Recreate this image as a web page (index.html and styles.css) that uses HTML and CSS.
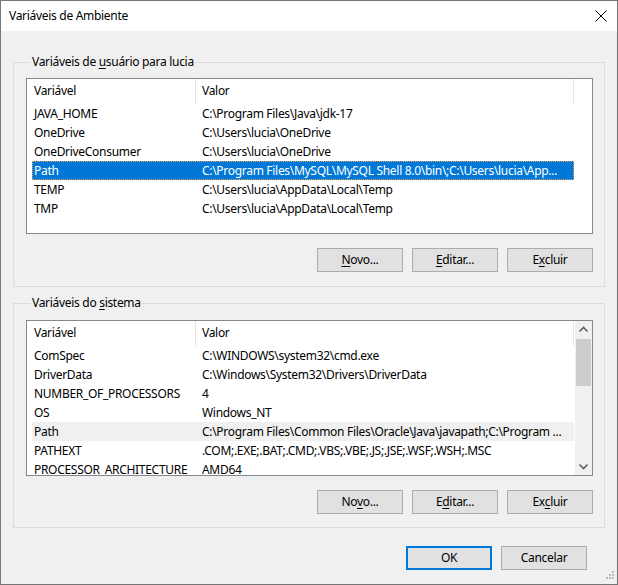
FILE: index.html
```html
<!DOCTYPE html>
<html lang="pt-BR">
<head>
<meta charset="utf-8">
<title>Variáveis de Ambiente</title>
<link rel="stylesheet" href="styles.css">
</head>
<body>
<div class="window">
  <div class="titlebar">
    <span class="title">Variáveis de Ambiente</span>
    <svg class="close" width="12" height="12" viewBox="0 0 12 12"><path d="M0.5 0.5 L11.5 11.5 M11.5 0.5 L0.5 11.5" stroke="#000" stroke-width="1" fill="none"/></svg>
  </div>
  <div class="content">
    <section class="group g1">
      <div class="legend">Variáveis de <u>u</u>suário para lucia</div>
      <div class="listview">
        <div class="lv-main">
          <div class="lv-header"><div class="h1">Variável</div><div class="h2">Valor</div></div>
          <div class="row"><span class="c1">JAVA_HOME</span><span class="c2">C:\Program Files\Java\jdk-17</span></div>
          <div class="row"><span class="c1">OneDrive</span><span class="c2">C:\Users\lucia\OneDrive</span></div>
          <div class="row"><span class="c1">OneDriveConsumer</span><span class="c2">C:\Users\lucia\OneDrive</span></div>
          <div class="row selected"><span class="c1">Path</span><span class="c2">C:\Program Files\MySQL\MySQL Shell 8.0\bin\;C:\Users\lucia\App...</span></div>
          <div class="row"><span class="c1">TEMP</span><span class="c2">C:\Users\lucia\AppData\Local\Temp</span></div>
          <div class="row"><span class="c1">TMP</span><span class="c2">C:\Users\lucia\AppData\Local\Temp</span></div>
        </div>
      </div>
      <div class="buttons">
        <button class="btn"><u>N</u>ovo...</button>
        <button class="btn"><u>E</u>ditar...</button>
        <button class="btn">E<u>x</u>cluir</button>
      </div>
    </section>

    <section class="group g2">
      <div class="legend">Variáveis do <u>s</u>istema</div>
      <div class="listview">
        <div class="lv-main">
          <div class="lv-header"><div class="h1">Variável</div><div class="h2">Valor</div></div>
          <div class="row"><span class="c1">ComSpec</span><span class="c2">C:\WINDOWS\system32\cmd.exe</span></div>
          <div class="row"><span class="c1">DriverData</span><span class="c2">C:\Windows\System32\Drivers\DriverData</span></div>
          <div class="row"><span class="c1">NUMBER_OF_PROCESSORS</span><span class="c2">4</span></div>
          <div class="row"><span class="c1">OS</span><span class="c2">Windows_NT</span></div>
          <div class="row hot"><span class="c1">Path</span><span class="c2">C:\Program Files\Common Files\Oracle\Java\javapath;C:\Program ...</span></div>
          <div class="row"><span class="c1">PATHEXT</span><span class="c2">.COM;.EXE;.BAT;.CMD;.VBS;.VBE;.JS;.JSE;.WSF;.WSH;.MSC</span></div>
          <div class="row"><span class="c1">PROCESSOR_ARCHITECTURE</span><span class="c2">AMD64</span></div>
        </div>
        <div class="scrollbar">
          <div class="sb-arrow"><svg width="17" height="17" viewBox="0 0 17 17"><polyline points="4.5,10.5 8.5,6.5 12.5,10.5" stroke="#606060" stroke-width="1.6" fill="none"/></svg></div>
          <div class="sb-track"><div class="sb-thumb"></div></div>
          <div class="sb-arrow"><svg width="17" height="17" viewBox="0 0 17 17"><polyline points="4.5,6.5 8.5,10.5 12.5,6.5" stroke="#606060" stroke-width="1.6" fill="none"/></svg></div>
        </div>
      </div>
      <div class="buttons">
        <button class="btn">No<u>v</u>o...</button>
        <button class="btn">E<u>d</u>itar...</button>
        <button class="btn">Ex<u>c</u>luir</button>
      </div>
    </section>

    <div class="dialog-buttons">
      <button class="btn default">OK</button>
      <button class="btn">Cancelar</button>
    </div>
  </div>
  <svg class="grip" width="12" height="12" viewBox="0 0 12 12">
    <rect x="9" y="0" width="2" height="2" fill="#bcbcbc"/>
    <rect x="6" y="3" width="2" height="2" fill="#bcbcbc"/>
    <rect x="9" y="3" width="2" height="2" fill="#bcbcbc"/>
    <rect x="3" y="6" width="2" height="2" fill="#bcbcbc"/>
    <rect x="6" y="6" width="2" height="2" fill="#bcbcbc"/>
    <rect x="9" y="6" width="2" height="2" fill="#bcbcbc"/>
  </svg>
</div>
</body>
</html>
```

FILE: styles.css
```css
* { box-sizing: border-box; }

html, body {
  margin: 0;
  padding: 0;
  background: #f0f0f0;
}

body {
  font-family: "Noto Sans", "Open Sans", "DejaVu Sans", sans-serif;
  font-size: 12px;
  letter-spacing: -0.3px;
  color: #000;
}

.window {
  position: relative;
  width: 618px;
  height: 585px;
  border: 1px solid #767676;
  background: #f0f0f0;
  overflow: hidden;
}

.titlebar {
  height: 30px;
  background: #fff;
  display: flex;
  align-items: center;
  justify-content: space-between;
  padding: 0 10px 0 8px;
}

.title {
  font-size: 12px;
  line-height: 16px;
}

.close {
  display: block;
  margin-top: -1px;
}

.content {
  display: flex;
  flex-direction: column;
}

.group {
  margin: 0 12px;
  border: 1px solid #dcdcdc;
  padding: 0 11px 13px 12px;
  display: flex;
  flex-direction: column;
}

.g1 { margin-top: 31px; padding-bottom: 14px; }
.g2 { margin-top: 16px; }

.legend {
  align-self: flex-start;
  margin: -9px 0 0 5px;
  padding: 0 1px;
  height: 16px;
  line-height: 16px;
  background: #f0f0f0;
  white-space: nowrap;
}

u {
  text-decoration: underline;
  text-underline-offset: 2px;
}

.listview {
  height: 156px;
  border: 1px solid #828790;
  background: #fff;
  display: flex;
  margin-top: 8px;
  overflow: hidden;
}

.g2 .listview { margin-top: 9px; }

.lv-main {
  flex: 1;
  min-width: 0;
  display: flex;
  flex-direction: column;
}

.lv-header {
  height: 25px;
  flex: none;
  display: flex;
}

.h1, .h2 {
  height: 100%;
  line-height: 24px;
  border-right: 1px solid #e5e5e5;
}

.h1 { width: 169px; padding-left: 7px; }
.h2 { width: 378px; padding-left: 6px; }

.row {
  height: 19px;
  flex: none;
  display: flex;
  align-items: center;
  margin-left: 5px;
  width: 542px;
  line-height: 17px;
  white-space: nowrap;
}

.c1 {
  width: 170px;
  flex: none;
  padding-left: 2px;
  overflow: hidden;
}

.c2 {
  flex: 1;
  min-width: 0;
  overflow: hidden;
}

.row.selected {
  background: #0078d7;
  color: #fff;
  outline: 1px dotted #e8a35a;
  outline-offset: -1px;
}

.row.hot {
  background: #f0f0f0;
}

.scrollbar {
  width: 17px;
  flex: none;
  background: #f0f0f0;
  display: flex;
  flex-direction: column;
}

.sb-arrow {
  height: 17px;
  flex: none;
}

.sb-arrow svg { display: block; }

.sb-track {
  flex: 1;
  padding: 1px 1px 0 1px;
}

.sb-thumb {
  height: 47px;
  background: #cdcdcd;
}

.buttons {
  display: flex;
  justify-content: flex-end;
  gap: 9px;
  margin-top: 14px;
}

.btn {
  width: 86px;
  height: 24px;
  border: 1px solid #adadad;
  background: #e1e1e1;
  font-family: inherit;
  font-size: 12px;
  letter-spacing: -0.3px;
  color: #000;
  padding: 0;
  margin: 0;
  line-height: 20px;
  text-align: center;
}

.btn.default {
  border: 2px solid #0078d7;
}

.dialog-buttons {
  display: flex;
  justify-content: flex-end;
  gap: 9px;
  margin: 18px 30px 0 0;
}

.grip {
  position: absolute;
  right: 2px;
  bottom: 1px;
}
```
